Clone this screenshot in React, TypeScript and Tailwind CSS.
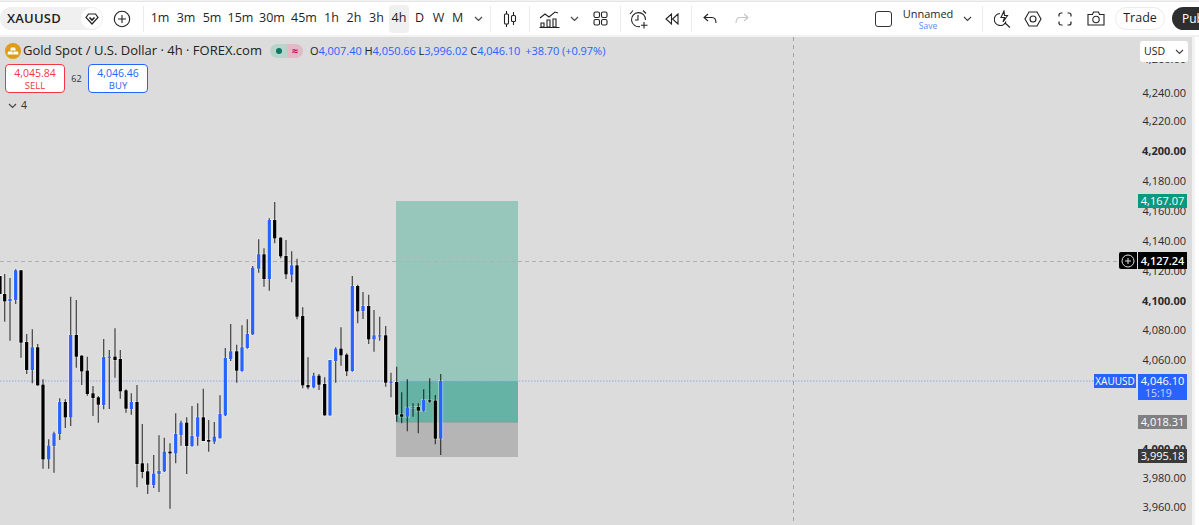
import React from "react";

type C = [number, number, number, number, number, number];
const A: C[] = [
[0,258,312,258,312,0],[14,252,395,312,334,0],[30,264,452,327,333,1],[47,238,342,241,330,1],[63,240,503,241,458,0],[80,432,552,456,540,0],[97,418,580,472,540,1],[113,462,587,472,586,0],[129,568,836,584,808,0],[146,748,836,767,808,1],[162,725,848,730,768,1],[179,625,750,636,732,1],[196,628,714,636,682,0],[212,320,708,435,682,1],[229,330,533,435,500,0],[245,496,585,497,544,0],[262,500,617,542,612,0],[279,588,678,610,624,0],[295,618,698,622,644,0],[311,447,658,501,645,1],[328,480,657,500,503,1],[345,415,563,500,510,0],[361,480,626,507,604,0],[378,598,668,601,656,0],[394,610,674,636,657,1],[411,585,892,636,822,0],[427,702,865,820,846,0],[443,820,912,844,884,0],[461,795,894,851,885,1],[477,736,906,843,852,1],[493,743,846,785,844,1],[510,760,956,785,790,0],[527,670,820,732,790,1],[543,692,767,698,735,1],[560,682,852,698,768,0],[576,648,770,738,768,1],[593,640,767,682,740,1]];
const B: C[] = [
[10,596,752,682,753,0],[26,690,785,750,755,0],[43,696,762,740,755,1],[60,616,745,672,745,1],[76,474,678,504,676,1],[92,402,513,484,507,1],[110,464,578,484,542,0],[126,406,545,472,543,1],[142,388,476,432,474,1],[158,228,435,233,433,1],[176,148,248,193,236,1],[192,175,290,193,267,0],[208,85,302,90,267,1],[224,36,160,90,145,0],[242,142,205,143,199,0],[258,150,267,198,253,0],[275,184,277,226,254,1],[291,206,388,226,380,0],[308,352,595,378,586,0],[324,502,598,585,592,0],[341,548,595,557,592,1],[357,552,600,557,584,0],[374,562,677,582,676,0],[390,510,677,510,676,1],[407,472,578,476,513,1],[423,412,527,476,496,0],[440,490,558,494,544,0],[457,258,545,288,543,1],[473,284,400,288,364,0],[489,306,387,348,363,1],[506,314,462,348,448,0],[522,360,485,436,448,1],[539,380,452,436,438,1],[557,408,590,436,578,0],[573,548,622,575,578,1],[590,530,695,576,674,0]];
const D: C[] = [
[65,97,190,163,170,0],[82,58,214,143,170,1],[99,130,170,141,144,1],[115,130,220,141,152,0],[131,88,155,120,152,1],[149,55,128,121,124,0],[166,105,253,122,236,0],[182,42,285,63,236,1]];

const candles = [
  ...A.map(c => ({ x: c[0] / 3, wt: 190 + c[1] / 3, wb: 190 + c[2] / 3, bt: 190 + c[3] / 3, bb: 190 + c[4] / 3, up: c[5] })),
  ...B.map(c => ({ x: 200 + c[0] / 3, wt: 190 + c[1] / 3, wb: 190 + c[2] / 3, bt: 190 + c[3] / 3, bb: 190 + c[4] / 3, up: c[5] })),
  ...D.map(c => ({ x: 380 + c[0] / 3, wt: 360 + c[1] / 3, wb: 360 + c[2] / 3, bt: 360 + c[3] / 3, bb: 360 + c[4] / 3, up: c[5] })),
];

function Chart() {
  return (
    <svg width="1192" height="488" viewBox="0 37 1192 488" className="absolute left-0 top-0">
      <rect x="396" y="201" width="122" height="180" fill="#97c6bb" />
      <rect x="396" y="381" width="122" height="41" fill="#65b3a4" />
      <rect x="396" y="422" width="122" height="35" fill="#b5b5b5" />
      <line x1="396" x2="518" y1="422" y2="422" stroke="#8a9a95" strokeWidth="1" />
      <line x1="793.5" x2="793.5" y1="37" y2="525" stroke="#a4a4a4" strokeDasharray="4 4" />
      <line x1="0" x2="1118" y1="261.5" y2="261.5" stroke="#b0b0b0" strokeDasharray="4 3" />
      <line x1="0" x2="1094" y1="381" y2="381" stroke="#8fa8ec" strokeDasharray="1.5 1.5" />
      <line x1="427" x2="438" y1="395" y2="382" stroke="#8fb0a8" strokeDasharray="3 2" />
      {candles.map((c, i) => (
        <g key={i}>
          <rect x={c.x - 2.5} y={c.bt - 1} width="5" height={c.bb - c.bt + 2} fill="#fff" opacity="0.4" />
          <line x1={c.x} x2={c.x} y1={c.wt} y2={c.wb} stroke="#000" strokeOpacity="0.65" strokeWidth="1.3" />
          <rect x={c.x - 1.6} y={c.bt} width="3.2" height={Math.max(c.bb - c.bt, 1.2)} fill={c.up ? "#2962ff" : "#000"} />
        </g>
      ))}
    </svg>
  );
}

const Sep = () => <div className="w-px h-[26px] bg-[#ececec] shrink-0" />;
const Chev = ({ className = "" }: { className?: string }) => (
  <svg width="9" height="6" viewBox="0 0 9 6" className={className} fill="none" stroke="#444" strokeWidth="1.2"><path d="M1 1l3.5 3.5L8 1" /></svg>
);

const tfs: [string, string][] = [["1m","w-[26px]"],["3m","w-[26px]"],["5m","w-[26px]"],["15m","w-[31px]"],["30m","w-[32px]"],["45m","w-[32px]"],["1h","w-[23px]"],["2h","w-[22px]"],["3h","w-[23px]"]];

function TopBar() {
  return (
    <div className="h-[34px] mt-px border-t border-[#e6e6e6] bg-white flex items-center text-[#1f1f1f] shrink-0 overflow-hidden">
      <div className="w-[103px] h-[23px] rounded-full bg-[#f0f0f0] flex items-center justify-between shrink-0 pl-[7px] pr-px">
        <span className="text-[13px] font-semibold tracking-[0.2px]">XAUUSD</span>
        <span className="w-[21px] h-[21px] rounded-full bg-white flex items-center justify-center">
          <svg width="14" height="12" viewBox="0 0 14 12" fill="none" stroke="#222" strokeWidth="1.2"><path d="M3.5 1h7L13 4.5 7 11 1 4.5z" /><path d="M4.5 4.5L7 7l2.5-2.5" strokeWidth="1.6" /></svg>
        </span>
      </div>
      <div className="w-[38px] flex justify-center shrink-0">
        <svg width="18" height="18" viewBox="0 0 18 18" fill="none" stroke="#222" strokeWidth="1.1"><circle cx="9" cy="9" r="7.7" /><path d="M9 5v8M5 9h8" /></svg>
      </div>
      <div className="w-[2px] shrink-0" />
      <Sep />
      <div className="w-[3px] shrink-0" />
      {tfs.map(([t, w]) => (
        <div key={t} className={`${w} text-center text-[12.5px] font-medium shrink-0`}>{t}</div>
      ))}
      <div className="w-[20px] h-[28px] bg-[#f0f0f0] rounded flex items-center justify-center text-[12.5px] font-medium shrink-0 mx-px">4h</div>
      <div className="w-[19px] text-center text-[12.5px] font-medium shrink-0">D</div>
      <div className="w-[19px] text-center text-[12.5px] font-medium shrink-0">W</div>
      <div className="w-[19px] text-center text-[12.5px] font-medium shrink-0">M</div>
      <div className="w-[23px] flex justify-center shrink-0"><Chev /></div>
      <Sep />
      <div className="w-[38px] flex justify-center shrink-0">
        <svg width="14" height="18" viewBox="0 0 14 18" fill="none" stroke="#222" strokeWidth="1.1"><path d="M3.5 1v16M10.5 2v13" /><rect x="1.5" y="4" width="4" height="10" rx="1" fill="#fff" /><rect x="8.5" y="5.5" width="4" height="6" rx="1" fill="#fff" /></svg>
      </div>
      <Sep />
      <div className="w-[39px] flex justify-center shrink-0">
        <svg width="21" height="18" viewBox="0 0 21 18" fill="none" stroke="#222" strokeWidth="1.1"><path d="M1 8l5-4 4 3 6-5 3 1" /><path d="M2 17v-4h3v4zM8 17v-7h3v7zM14 17v-8h3v8zM.5 17.5h20" /></svg>
      </div>
      <div className="w-[11px] flex justify-center shrink-0"><Chev /></div>
      <div className="w-[40px] flex justify-center shrink-0">
        <svg width="15" height="15" viewBox="0 0 15 15" fill="none" stroke="#222" strokeWidth="1.1"><rect x="1" y="1" width="5.5" height="5.5" rx="1.5" /><rect x="8.5" y="1" width="5.5" height="5.5" rx="1.5" /><rect x="1" y="8.5" width="5.5" height="5.5" rx="1.5" /><rect x="8.5" y="8.5" width="5.5" height="5.5" rx="1.5" /></svg>
      </div>
      <Sep />
      <div className="w-[36px] flex justify-center shrink-0">
        <svg width="20" height="20" viewBox="0 0 20 20" fill="none" stroke="#222" strokeWidth="1.1"><path d="M11 17.5A7 7 0 1 1 16.5 11" /><path d="M9 6v5H6" /><path d="M1 5l3-3.5M14 1.5L17 4.5M15 13v6.5M12 16.2h6.5" /></svg>
      </div>
      <div className="w-[30px] flex justify-center shrink-0">
        <svg width="14" height="12" viewBox="0 0 14 12" fill="none" stroke="#222" strokeWidth="1.1"><path d="M6.5 1L1 6l5.5 5zM13 1L7.5 6l5.5 5z" /></svg>
      </div>
      <div className="w-[4px] shrink-0" />
      <Sep />
      <div className="w-[36px] flex justify-center shrink-0">
        <svg width="14" height="11" viewBox="0 0 14 11" fill="none" stroke="#222" strokeWidth="1.1"><path d="M5 1L1 4.5 5 8M1 4.5h8c2.5 0 4 1.5 4 5.5" /></svg>
      </div>
      <div className="w-[28px] flex justify-center shrink-0">
        <svg width="14" height="11" viewBox="0 0 14 11" fill="none" stroke="#c4c4c4" strokeWidth="1.1"><path d="M9 1l4 3.5L9 8M13 4.5H5C2.5 4.5 1 6 1 10" /></svg>
      </div>
      <div className="w-[119px] shrink-0" />
      <div className="w-[17px] h-[16px] border border-[#333] rounded-[3px] shrink-0" />
      <div className="w-[11px] shrink-0" />
      <div className="w-[50px] flex flex-col items-center leading-none shrink-0">
        <span className="text-[11px] text-[#1f1f1f] leading-[14px] whitespace-nowrap">Unnamed</span>
        <span className="text-[8.5px] text-[#5b8cff] leading-[9px]">Save</span>
      </div>
      <div className="w-[29px] flex justify-center shrink-0"><Chev /></div>
      <Sep />
      <div className="w-[38px] flex justify-center shrink-0">
        <svg width="17" height="18" viewBox="0 0 17 18" fill="none" stroke="#222" strokeWidth="1.1"><path d="M6 3.5a6 6 0 1 0 6 8" /><path d="M11 13l5 4.5" /><path d="M10 1L7 7.5h3.5L9 12l4.5-6.5H10.5z" /></svg>
      </div>
      <div className="w-[24px] flex justify-center shrink-0">
        <svg width="18" height="16" viewBox="0 0 18 16" fill="none" stroke="#222" strokeWidth="1.1"><path d="M5 1h8l4 7-4 7H5L1 8z" /><circle cx="9" cy="8" r="3" /></svg>
      </div>
      <div className="w-[40px] flex justify-center shrink-0">
        <svg width="14" height="14" viewBox="0 0 14 14" fill="none" stroke="#222" strokeWidth="1.2"><path d="M1 4.5V3a2 2 0 0 1 2-2h1.5M9.5 1H11a2 2 0 0 1 2 2v1.5M13 9.5V11a2 2 0 0 1-2 2H9.5M4.5 13H3a2 2 0 0 1-2-2V9.5" /></svg>
      </div>
      <div className="w-[22px] flex justify-center shrink-0">
        <svg width="18" height="15" viewBox="0 0 18 15" fill="none" stroke="#222" strokeWidth="1.1"><path d="M1 3.5h4.5L6.5 1h5l1 2.5H17V14H1z" /><circle cx="9" cy="8.5" r="3.2" /></svg>
      </div>
      <div className="w-[8px] shrink-0" />
      <div className="w-[50px] h-[23px] rounded-full border border-[#ececec] flex items-center justify-center text-[12.5px] font-medium shrink-0">Trade</div>
      <div className="w-[7px] shrink-0" />
      <div className="w-[60px] h-[23px] rounded-full bg-[#2e2e2e] text-white text-[12px] font-medium pl-[10px] flex items-center shrink-0">Publish</div>
    </div>
  );
}

function Legend() {
  return (
    <div className="absolute left-[5px] top-[5px] flex flex-col items-start">
      <div className="flex items-center h-[18px]">
        <svg width="16" height="16" viewBox="0 0 16 16" className="shrink-0"><circle cx="8" cy="8" r="8" fill="#dd9d16" /><path d="M6 4.5h4l.8 3H5.2zM3 8.5h4.5l.5 3H2.5zM8.5 8.5H13l.5 3H8z" fill="#fff" /></svg>
        <span className="ml-[2px] text-[13px] text-[#222] whitespace-nowrap w-[247px]">Gold Spot / U.S. Dollar · 4h · FOREX.com</span>
        <div className="w-[33px] h-[14px] rounded-full overflow-hidden flex shrink-0">
          <div className="w-[17px] bg-[#b9d4cb] flex items-center justify-center"><div className="w-[6px] h-[6px] rounded-full bg-[#0a7a62]" /></div>
          <div className="w-[16px] bg-[#e3b9c8] flex items-center justify-center text-[11px] font-bold leading-[14px] text-[#c2185b]">≈</div>
        </div>
        <div className="ml-[7px] text-[11px] whitespace-nowrap text-[#2962ff] tracking-[-0.04px]">
          <span className="text-[#222]">O</span>4,007.40 <span className="text-[#222]">H</span>4,050.66 <span className="text-[#222]">L</span>3,996.02 <span className="text-[#222]">C</span>4,046.10 <span className="ml-[2px]">+38.70 (+0.97%)</span>
        </div>
      </div>
      <div className="flex items-center mt-[4px]">
        <div className="w-[60px] h-[29px] rounded-[4px] border border-[#f23645] bg-white flex flex-col items-center justify-center text-[#f23645]">
          <span className="text-[10.5px] leading-[13px]">4,045.84</span>
          <span className="text-[9.5px] leading-[11px]">SELL</span>
        </div>
        <div className="w-[23px] text-center text-[9px] text-[#333]">62</div>
        <div className="w-[60px] h-[29px] rounded-[4px] border border-[#2962ff] bg-white flex flex-col items-center justify-center text-[#2962ff]">
          <span className="text-[10.5px] leading-[13px]">4,046.46</span>
          <span className="text-[9.5px] leading-[11px]">BUY</span>
        </div>
      </div>
      <div className="flex items-center mt-[7px] ml-[3px] h-[12px]">
        <Chev />
        <span className="ml-[4px] text-[10.5px] text-[#333]">4</span>
      </div>
    </div>
  );
}

const axis: [string, number, boolean][] = [["4,260.00",59,false],["4,240.00",93,false],["4,220.00",121,false],["4,200.00",151,true],["4,180.00",181,false],["4,160.00",211,false],["4,140.00",241,false],["4,120.00",271,false],["4,100.00",301,true],["4,080.00",330,false],["4,060.00",360,false],["4,020.00",419,false],["4,000.00",449,true],["3,980.00",478,false],["3,960.00",507,false]];

function Badge({ top, h = 14, bg, children }: { top: number; h?: number; bg: string; children: React.ReactNode }) {
  return (
    <div className={`absolute left-[1138px] w-[49px] text-white text-[11px] font-medium text-center leading-[14px] ${bg}`} style={{ top: top - 37, height: h }}>
      {children}
    </div>
  );
}

export default function App() {
  return (
    <div className="w-[1199px] h-[525px] bg-[#f2f2f2] flex flex-col overflow-hidden font-['Open_Sans','Noto_Sans',sans-serif]">
      <TopBar />
      <div className="h-[2px] shrink-0" />
      <div className="flex gap-[3px] h-[488px]">
        <div className="relative w-[1192px] h-[488px] bg-[#dcdcdc] overflow-hidden shrink-0">
          <Chart />
          <Legend />
          {axis.map(([t, y, b]) => (
            <div key={t} className={`absolute right-[6px] text-[11px] leading-[14px] text-[#2a2a2a] ${b ? "font-bold" : ""}`} style={{ top: y - 37 - 7 }}>{t}</div>
          ))}
          <div className="absolute left-[1140px] top-[4px] w-[48px] h-[21px] bg-white rounded-[3px] flex items-center justify-between px-[4px]">
            <span className="text-[10.5px] text-[#222]">USD</span>
            <Chev />
          </div>
          <Badge top={194} bg="bg-[#089981]">4,167.07</Badge>
          <div className="absolute left-[1119px] w-[18px] h-[17px] bg-black rounded-l-[2px] flex items-center justify-center top-[215px]">
            <svg width="14" height="14" viewBox="0 0 14 14" fill="none" stroke="#ddd" strokeWidth="1"><circle cx="7" cy="7" r="6" /><path d="M7 4v6M4 7h6" /></svg>
          </div>
          <Badge top={252} h={17} bg="bg-black"><span className="leading-[17px] font-semibold">4,127.24</span></Badge>
          <div className="absolute left-[1094px] top-[337px] w-[42px] h-[14px] bg-[#2962ff] text-white text-[10px] font-medium text-center leading-[14px]">XAUUSD</div>
          <Badge top={374} h={26} bg="bg-[#2962ff]">
            <div className="leading-[14px]">4,046.10</div>
            <div className="leading-[11px] text-[10.5px] text-[#c9d7ff] text-left pl-[7px]">15:19</div>
          </Badge>
          <Badge top={415} bg="bg-[#808080]">4,018.31</Badge>
          <Badge top={449} bg="bg-[#3a3a3a]">3,995.18</Badge>
        </div>
        <div className="flex-1 bg-white" />
      </div>
    </div>
  );
}
